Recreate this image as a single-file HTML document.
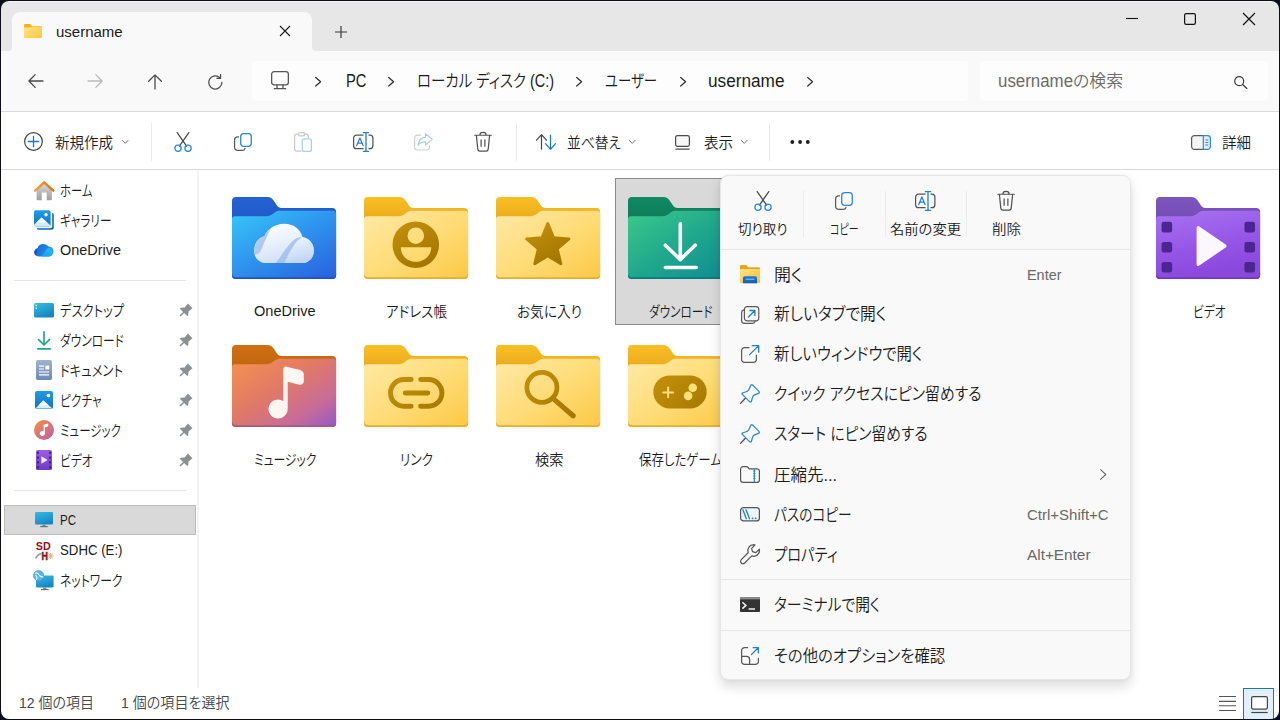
<!DOCTYPE html>
<html lang="ja">
<head>
<meta charset="utf-8">
<title>username</title>
<style>
html,body{margin:0;padding:0;}
body{width:1280px;height:720px;overflow:hidden;background:#fff;position:relative;
 font-family:"Liberation Sans","Noto Sans CJK JP",sans-serif;font-size:15px;color:#1b1b1b;}
*{box-sizing:border-box;}
div,span{position:absolute;}
svg{position:absolute;overflow:visible;}
#frame{left:1px;top:1px;width:1278px;height:718px;border-radius:8px;box-shadow:0 0 0 12px #0b0d1c;z-index:100;}
#titlebar{left:0;top:0;width:1280px;height:51px;background:#e7e7e7;}
#tab{left:12px;top:12px;width:300px;height:39px;background:#f9f9f9;border-radius:8px 8px 0 0;}
#nav{left:0;top:51px;width:1280px;height:61px;background:#f9f9f9;border-bottom:1px solid #dadada;}
#addr{left:252px;top:60.500px;width:716px;height:40px;background:#fdfdfd;border-radius:4px;}
#search{left:980px;top:60.500px;width:288px;height:40px;background:#fdfdfd;border-radius:4px;}
#cmd{left:0;top:112px;width:1280px;height:58px;background:#fff;border-bottom:1px solid #d8d8d8;}
#side{left:0;top:170px;width:199px;height:518px;background:#fff;border-right:2px solid #f3f3f3;}
#content{left:199px;top:170px;width:1081px;height:520px;background:#fff;}
#status{left:0;top:690px;width:1280px;height:30px;background:#fff;}
.t{white-space:nowrap;font-weight:350;transform-origin:0 50%;line-height:20px;height:20px;font-feature-settings:"palt";}
.c{transform:translateX(-50%);}
</style>
</head>
<body>
<div id="titlebar"></div>
<div id="tab"></div>
<div id="nav"></div>
<div id="addr"></div>
<div id="search"></div>
<div id="cmd"></div>
<div id="side"></div>
<div id="content"></div>
<div id="status"></div>
<!-- top highlight -->
<div style="left:8px;top:1px;width:1264px;height:1px;background:#f4f4f4"></div>
<!-- tab flares -->
<svg style="left:8px;top:47px" width="4" height="4" viewBox="0 0 4 4"><path d="M4 0V4H0A4 4 0 0 0 4 0Z" fill="#f9f9f9"/></svg>
<svg style="left:312px;top:47px" width="4" height="4" viewBox="0 0 4 4"><path d="M0 0V4H4A4 4 0 0 1 0 0Z" fill="#f9f9f9"/></svg>
<!-- tab folder icon -->
<svg style="left:24px;top:24px" width="18" height="14" viewBox="0 0 18 14">
 <defs><linearGradient id="tf" x1="0" y1="0" x2="1" y2="1"><stop offset="0" stop-color="#ffe48f"/><stop offset="1" stop-color="#fbc739"/></linearGradient></defs>
 <path d="M0 1.2A1.2 1.2 0 0 1 1.2 0H6L8 2H16.8A1.2 1.2 0 0 1 18 3.2V5H0Z" fill="#f0b41c"/>
 <path d="M0 3.6H7L8.6 2.4H17A1 1 0 0 1 18 3.4V13A1 1 0 0 1 17 14H1A1 1 0 0 1 0 13Z" fill="url(#tf)"/>
</svg>
<!-- tab close -->
<svg style="left:280px;top:26px" width="10" height="10" viewBox="0 0 10 10"><path d="M0 0L10 10M10 0L0 10" stroke="#1b1b1b" stroke-width="1.1" fill="none"/></svg>
<!-- new tab plus -->
<svg style="left:335px;top:26px" width="12" height="12" viewBox="0 0 12 12"><path d="M6 0V12M0 6H12" stroke="#3a3a3a" stroke-width="1.2" fill="none"/></svg>
<!-- window controls -->
<svg style="left:1126px;top:12px" width="12" height="14" viewBox="0 0 12 14"><path d="M0 6.5H12" stroke="#111" stroke-width="1.1"/></svg>
<svg style="left:1184px;top:13px" width="12" height="12" viewBox="0 0 12 12"><rect x="0.6" y="0.6" width="10.8" height="10.8" rx="1.6" stroke="#111" stroke-width="1.2" fill="none"/></svg>
<svg style="left:1243px;top:13px" width="12" height="12" viewBox="0 0 12 12"><path d="M0 0L12 12M12 0L0 12" stroke="#111" stroke-width="1.2" fill="none"/></svg>

<div class="t" style="left:56.0px;top:21.5px">username</div>
<!-- back -->
<svg style="left:28px;top:74px" width="15" height="14" viewBox="0 0 15 14"><path d="M15 7H1M7.2 0.6L0.9 7L7.2 13.4" stroke="#4a4a4a" stroke-width="1.3" fill="none" stroke-linecap="round" stroke-linejoin="round"/></svg>
<!-- forward -->
<svg style="left:88px;top:74px" width="15" height="14" viewBox="0 0 15 14"><path d="M0 7H14M7.8 0.6L14.1 7L7.8 13.4" stroke="#b9b9b9" stroke-width="1.3" fill="none" stroke-linecap="round" stroke-linejoin="round"/></svg>
<!-- up -->
<svg style="left:148px;top:74px" width="14" height="15" viewBox="0 0 14 15"><path d="M7 15V1M0.6 7.2L7 0.9L13.4 7.2" stroke="#4a4a4a" stroke-width="1.3" fill="none" stroke-linecap="round" stroke-linejoin="round"/></svg>
<!-- refresh -->
<svg style="left:208px;top:73.500px" width="15" height="15.500" viewBox="0 0 15 15.500"><path d="M13.9 8.300A6.600 6.600 0 1 1 11.900 3.700" stroke="#4a4a4a" stroke-width="1.250" fill="none" stroke-linecap="round"/><path d="M12.600 0.600V4.300H8.900" stroke="#4a4a4a" stroke-width="1.250" fill="none" stroke-linecap="round" stroke-linejoin="round"/></svg>
<!-- monitor -->
<svg style="left:271px;top:71px" width="18" height="18.500" viewBox="0 0 18 18.500"><rect x="0.650" y="0.650" width="16.700" height="13.200" rx="2.400" stroke="#555" stroke-width="1.300" fill="none"/><path d="M6 14V17.300M12 14V17.300M3.300 17.700H14.700" stroke="#555" stroke-width="1.300" fill="none" stroke-linecap="round"/></svg>
<!-- chevrons -->
<svg style="left:315px;top:77px" width="6.500" height="9.500" viewBox="0 0 6.500 9.500"><path id="chv" d="M0.700 0.500L5.600 4.750L0.700 9" stroke="#2a2a2a" stroke-width="1.200" fill="none" stroke-linecap="round" stroke-linejoin="round"/></svg>
<svg style="left:388px;top:77px" width="6.500" height="9.500" viewBox="0 0 6.500 9.500"><path d="M0.700 0.500L5.600 4.750L0.700 9" stroke="#2a2a2a" stroke-width="1.200" fill="none" stroke-linecap="round" stroke-linejoin="round"/></svg>
<svg style="left:576px;top:77px" width="6.500" height="9.500" viewBox="0 0 6.500 9.500"><path d="M0.700 0.500L5.600 4.750L0.700 9" stroke="#2a2a2a" stroke-width="1.200" fill="none" stroke-linecap="round" stroke-linejoin="round"/></svg>
<svg style="left:679.500px;top:77px" width="6.500" height="9.500" viewBox="0 0 6.500 9.500"><path d="M0.700 0.500L5.600 4.750L0.700 9" stroke="#2a2a2a" stroke-width="1.200" fill="none" stroke-linecap="round" stroke-linejoin="round"/></svg>
<svg style="left:807px;top:77px" width="6.500" height="9.500" viewBox="0 0 6.500 9.500"><path d="M0.700 0.500L5.600 4.750L0.700 9" stroke="#2a2a2a" stroke-width="1.200" fill="none" stroke-linecap="round" stroke-linejoin="round"/></svg>
<!-- search icon -->
<svg style="left:1234px;top:75.500px" width="13.500" height="13" viewBox="0 0 13.500 13"><circle cx="5.200" cy="5.200" r="4.500" stroke="#3c3c3c" stroke-width="1.200" fill="none"/><path d="M8.500 8.500L12.900 12.400" stroke="#3c3c3c" stroke-width="1.300" stroke-linecap="round"/></svg>

<div class="t" style="left:345.5px;top:70.5px;font-size:17.5px;transform:scaleX(0.843)">PC</div>
<div class="t" style="left:416.5px;top:70.5px;font-size:17.5px;transform:scaleX(0.826)">ローカル ディスク (C:)</div>
<div class="t" style="left:605.0px;top:70.5px;font-size:17.5px;transform:scaleX(0.765)">ユーザー</div>
<div class="t" style="left:708.0px;top:70.5px;font-size:17.5px;transform:scaleX(0.983)">username</div>
<div class="t" style="left:997.5px;top:71.0px;font-size:17.5px;transform:scaleX(0.964);color:#6b6b6b">usernameの検索</div>
<!-- new (+) -->
<svg style="left:24px;top:131.800px" width="19" height="19" viewBox="0 0 19 19"><circle cx="9.500" cy="9.500" r="8.850" stroke="#444" stroke-width="1.200" fill="none"/><path d="M9.500 4.300V14.700M4.300 9.500H14.700" stroke="#0a7bd6" stroke-width="1.300" stroke-linecap="round"/></svg>
<svg style="left:121.700px;top:140.200px" width="6.500" height="4" viewBox="0 0 6.500 4"><path d="M0.400 0.400L3.250 3.400L6.100 0.400" stroke="#777" stroke-width="1" fill="none" stroke-linecap="round" stroke-linejoin="round"/></svg>
<div style="left:150.500px;top:123px;width:1px;height:38px;background:#eaeaea"></div>
<!-- cut -->
<svg style="left:174px;top:132px" width="18" height="20" viewBox="0 0 18 20"><path d="M3.200 0.600L12.600 14.200M14.800 0.600L5.400 14.200" stroke="#4a4a4a" stroke-width="1.250" stroke-linecap="round" fill="none"/><circle cx="4" cy="16.300" r="3.100" stroke="#2b88d8" stroke-width="1.300" fill="none"/><circle cx="14" cy="16.300" r="3.100" stroke="#2b88d8" stroke-width="1.300" fill="none"/></svg>
<!-- copy -->
<svg style="left:234px;top:133px" width="18" height="18" viewBox="0 0 18 18"><path d="M4.500 3.900H3.600A3 3 0 0 0 0.600 6.900V14.400A3 3 0 0 0 3.600 17.400H8.200A3 3 0 0 0 11 15.500" stroke="#5a5a5a" stroke-width="1.250" fill="none" stroke-linecap="round"/><rect x="6.700" y="0.650" width="10.600" height="12.700" rx="3" stroke="#2b88d8" stroke-width="1.300" fill="#fdfdfd"/></svg>
<!-- paste (disabled) -->
<svg style="left:294px;top:132px" width="18" height="20" viewBox="0 0 18 20"><path d="M7 19.200H2.600A2 2 0 0 1 0.600 17.200V4.200A2 2 0 0 1 2.600 2.200H4.500M10.500 2.200H12.400A2 2 0 0 1 14.400 4.200V5.500" stroke="#c9c9c9" stroke-width="1.200" fill="none" stroke-linecap="round"/><rect x="4.400" y="0.600" width="6.200" height="3.200" rx="1.600" stroke="#c9c9c9" stroke-width="1.200" fill="none"/><rect x="8.200" y="6.800" width="9.200" height="12.600" rx="2" stroke="#a9cff0" stroke-width="1.300" fill="#fdfdfd"/></svg>
<!-- rename -->
<svg style="left:353px;top:132px" width="20.500" height="20" viewBox="0 0 20.500 20"><path d="M10.500 3.100H3.600A3 3 0 0 0 0.600 6.100V13.700A3 3 0 0 0 3.600 16.700H10.500M15.500 3.100H16.900A3 3 0 0 1 19.900 6.100V13.700A3 3 0 0 1 16.900 16.700H15.500" stroke="#555" stroke-width="1.250" fill="none"/><path d="M13 0.650V19.350M10.400 0.650H15.600M10.400 19.350H15.600" stroke="#1f7fd1" stroke-width="1.300" fill="none" stroke-linecap="round"/><path d="M3.700 13.600L6.900 5.900L10.100 13.600M4.800 11.200H9" stroke="#1f7fd1" stroke-width="1.200" fill="none" stroke-linejoin="round" stroke-linecap="round"/></svg>
<!-- share (disabled) -->
<svg style="left:414px;top:133px" width="19" height="18" viewBox="0 0 19 18"><path d="M6.500 2.100H3.600A3 3 0 0 0 0.600 5.100V14A3 3 0 0 0 3.600 17H12.500A3 3 0 0 0 15.500 14V12.800" stroke="#cfcfcf" stroke-width="1.200" fill="none" stroke-linecap="round"/><path d="M11.600 0.800L18.200 6.400L11.600 12V8.800C8 8.600 5.700 9.800 4.200 12.400C4.600 7.800 7.200 4.600 11.600 4.200Z" stroke="#a9cff0" stroke-width="1.200" fill="none" stroke-linejoin="round"/></svg>
<!-- delete -->
<svg style="left:474px;top:132.300px" width="18" height="19.700" viewBox="0 0 18 20"><path d="M0.600 3.300H17.400M5.800 3.100A3.200 2.800 0 0 1 12.200 3.100M2.300 3.500L3.700 17.400A2.200 2.200 0 0 0 5.900 19.400H12.100A2.200 2.200 0 0 0 14.300 17.400L15.700 3.500M7.100 8V14.500M10.900 8V14.500" stroke="#505050" stroke-width="1.250" fill="none" stroke-linecap="round"/></svg>
<div style="left:516px;top:123px;width:1px;height:38px;background:#eaeaea"></div>
<!-- sort -->
<svg style="left:536px;top:134px" width="20" height="16" viewBox="0 0 20 16"><path d="M5.500 15V0.800M0.500 6.200L5.500 0.700L10.500 6.200" stroke="#4a4a4a" stroke-width="1.250" fill="none" stroke-linecap="round" stroke-linejoin="round"/><path d="M14.500 1V15.200M9.500 9.700L14.500 15.300L19.500 9.700" stroke="#1a77c9" stroke-width="1.250" fill="none" stroke-linecap="round" stroke-linejoin="round"/></svg>
<svg style="left:628.500px;top:140px" width="6.500" height="4" viewBox="0 0 6.500 4"><path d="M0.400 0.400L3.250 3.400L6.100 0.400" stroke="#777" stroke-width="1" fill="none" stroke-linecap="round" stroke-linejoin="round"/></svg>
<!-- view -->
<svg style="left:675.200px;top:134.500px" width="15" height="15" viewBox="0 0 15 15"><rect x="0.600" y="0.600" width="13.800" height="10.800" rx="1.800" stroke="#4a4a4a" stroke-width="1.200" fill="#f6f6f6"/><path d="M0.800 14.100H14.200" stroke="#4a4a4a" stroke-width="1.200" stroke-linecap="round"/></svg>
<svg style="left:740.500px;top:140px" width="6.500" height="4" viewBox="0 0 6.500 4"><path d="M0.400 0.400L3.250 3.400L6.100 0.400" stroke="#777" stroke-width="1" fill="none" stroke-linecap="round" stroke-linejoin="round"/></svg>
<div style="left:769px;top:123px;width:1px;height:38px;background:#eaeaea"></div>
<!-- more -->
<svg style="left:790.300px;top:140.300px" width="20" height="4" viewBox="0 0 20 4"><circle cx="2.300" cy="2" r="1.900" fill="#1f1f1f"/><circle cx="10.100" cy="2" r="1.900" fill="#1f1f1f"/><circle cx="17.800" cy="2" r="1.900" fill="#1f1f1f"/></svg>
<!-- details -->
<svg style="left:1191px;top:134.500px" width="20" height="15" viewBox="0 0 20 15"><path d="M12.300 0.600H3.400A2.800 2.800 0 0 0 0.600 3.400V11.600A2.800 2.800 0 0 0 3.400 14.400H12.300" stroke="#5a5a5a" stroke-width="1.200" fill="#f4f4f4"/><path d="M12.300 0.600H16.600A2.800 2.800 0 0 1 19.400 3.400V11.600A2.800 2.800 0 0 1 16.600 14.400H12.300Z" stroke="#2b88d8" stroke-width="1.200" fill="#e3f0fb"/><path d="M14.400 5H17.300M14.400 7.500H17.300M14.400 10H17.300" stroke="#2b88d8" stroke-width="1.100"/></svg>

<div class="t" style="left:55.0px;top:132.5px;transform:scaleX(0.966)">新規作成</div>
<div class="t" style="left:567.0px;top:132.5px;transform:scaleX(0.917)">並べ替え</div>
<div class="t" style="left:704.0px;top:132.5px;transform:scaleX(0.966)">表示</div>
<div class="t" style="left:1222.0px;top:132.5px;transform:scaleX(0.966)">詳細</div>
<!-- sidebar separators -->
<div style="left:14px;top:280px;width:172px;height:1px;background:#e3e3e3"></div>
<div style="left:14px;top:490px;width:172px;height:1px;background:#e3e3e3"></div>
<!-- selected PC row -->
<div style="left:4px;top:505px;width:192px;height:30px;background:#d9d9d9;border:1px solid #bdbdbd"></div>
<!-- home -->
<svg style="left:33.500px;top:180.500px" width="20.500" height="19.500" viewBox="0 0 20.500 19.500">
 <defs><linearGradient id="hg" x1="0" y1="0" x2="0" y2="1"><stop offset="0" stop-color="#d9d9d9"/><stop offset="1" stop-color="#9f9f9f"/></linearGradient>
 <linearGradient id="hr" x1="0" y1="0" x2="1" y2="0"><stop offset="0" stop-color="#f0a040"/><stop offset="1" stop-color="#d9731f"/></linearGradient></defs>
 <path d="M2.600 8.500L10.250 2L17.900 8.500V18.300A1 1 0 0 1 16.900 19.300H12.700V11.500H7.800V19.300H3.600A1 1 0 0 1 2.600 18.300Z" fill="url(#hg)"/>
 <path d="M1.200 9.600L10.250 1.300L19.300 9.600" stroke="url(#hr)" stroke-width="2.500" fill="none" stroke-linecap="round" stroke-linejoin="round"/>
</svg>
<!-- gallery -->
<svg style="left:34px;top:210px" width="20" height="20" viewBox="0 0 20 20">
 <defs><linearGradient id="gg" x1="0" y1="0" x2="0" y2="1"><stop offset="0" stop-color="#1f9be8"/><stop offset="1" stop-color="#1275c4"/></linearGradient></defs>
 <rect x="2.600" y="2.800" width="17.200" height="17" rx="2.200" fill="#1565b0"/>
 <rect x="1.600" y="1.600" width="16.600" height="16.600" rx="2" fill="#e9f3fb"/>
 <rect x="0" y="0.200" width="16.600" height="16.400" rx="1.800" fill="url(#gg)"/>
 <path d="M0 16.600V14.800L7.600 7.600L16.600 15.600V16.600Z" fill="#d6ebfa"/>
 <path d="M2.500 12.500L7.600 7.600L13 12.400Z" fill="#ffffff"/>
 <circle cx="12" cy="4.800" r="1.700" fill="#fff"/>
</svg>
<!-- onedrive -->
<svg style="left:33.800px;top:242.500px" width="20.200" height="13.800" viewBox="0 0 20.500 14.500" preserveAspectRatio="none">
 <defs><linearGradient id="og1" x1="0" y1="0" x2="1" y2="0.300"><stop offset="0" stop-color="#1b63da"/><stop offset="1" stop-color="#1f94ee"/></linearGradient>
 <linearGradient id="og2" x1="0" y1="1" x2="1" y2="0"><stop offset="0" stop-color="#1f98ee"/><stop offset="1" stop-color="#1cc2f2"/></linearGradient></defs>
 <path d="M4.600 14.300A4.500 4.500 0 0 1 3.600 5.500A6.200 6.200 0 0 1 14.800 3.800A5.300 5.300 0 0 1 15.400 14.300Z" fill="url(#og1)"/>
 <path d="M7.500 14.300L12.800 6.200A4.600 4.600 0 0 1 16 4.900A5.100 5.100 0 0 1 15.400 14.300Z" fill="url(#og2)"/>
 <path d="M0.800 12A4.500 4.500 0 0 1 3.600 5.500C4.200 4.300 4.900 3.400 5.800 2.700C3.200 5 2.200 8.500 2.600 12.600Z" fill="#1746b8" opacity="0.850"/>
</svg>
<!-- desktop -->
<svg style="left:34px;top:302.500px" width="20" height="14.500" viewBox="0 0 20 14.500">
 <defs><linearGradient id="dg" x1="0" y1="0" x2="0.600" y2="1"><stop offset="0" stop-color="#35bfe6"/><stop offset="1" stop-color="#1685bd"/></linearGradient></defs>
 <rect x="0" y="0" width="20" height="14.500" rx="1.600" fill="url(#dg)"/>
 <rect x="1.500" y="1.700" width="1.500" height="1.500" fill="#e8f8ff"/><rect x="1.500" y="4.600" width="1.500" height="1.500" fill="#e8f8ff"/>
</svg>
<!-- downloads -->
<svg style="left:37px;top:331px" width="14" height="19" viewBox="0 0 14 19"><path d="M7 0.800V13.600M1.600 8.600L7 14L12.400 8.600" stroke="#22a886" stroke-width="1.700" fill="none" stroke-linecap="round" stroke-linejoin="round"/><path d="M0.800 17.900H13.200" stroke="#22a886" stroke-width="1.700" stroke-linecap="round"/></svg>
<!-- documents -->
<svg style="left:36px;top:360px" width="16" height="20" viewBox="0 0 16 20">
 <defs><linearGradient id="dcg" x1="0" y1="0" x2="0" y2="1"><stop offset="0" stop-color="#9fb4cf"/><stop offset="1" stop-color="#6d8cb2"/></linearGradient></defs>
 <rect x="0" y="0" width="16" height="20" rx="1.600" fill="url(#dcg)"/>
 <path d="M3 6.200H8M3 9H8M3 12H13M3 14.800H13" stroke="#fff" stroke-width="1.200"/><rect x="9.400" y="5.600" width="3.800" height="3.800" fill="#fff"/>
</svg>
<!-- pictures -->
<svg style="left:35px;top:391px" width="18" height="18" viewBox="0 0 18 18">
 <defs><linearGradient id="pg" x1="0" y1="0" x2="0" y2="1"><stop offset="0" stop-color="#1f9be8"/><stop offset="1" stop-color="#1275c4"/></linearGradient></defs>
 <rect x="0" y="0" width="18" height="18" rx="2" fill="url(#pg)"/>
 <path d="M0.600 17.400L8.200 9.400L17.400 17.400Z" fill="#dcedfb"/>
 <path d="M3.600 14.200L8.200 9.400L13.700 14.200Z" fill="#fff"/>
 <circle cx="13.400" cy="4.600" r="1.800" fill="#fff"/>
</svg>
<!-- music -->
<svg style="left:34px;top:420px" width="20" height="20" viewBox="0 0 20 20">
 <defs><linearGradient id="mg" x1="0.150" y1="0.100" x2="0.850" y2="0.950"><stop offset="0" stop-color="#ee8a50"/><stop offset="1" stop-color="#c0629f"/></linearGradient></defs>
 <circle cx="10" cy="10" r="10" fill="url(#mg)"/>
 <path d="M9.600 4.800L14.200 3.600V6.400L10.900 7.300V13.600A2.600 2.400 0 1 1 9.600 11.500Z" fill="#fff"/>
</svg>
<!-- videos -->
<svg style="left:36px;top:450px" width="16" height="20" viewBox="0 0 16 20">
 <defs><linearGradient id="vg" x1="0" y1="0" x2="0" y2="1"><stop offset="0" stop-color="#9a5ee6"/><stop offset="1" stop-color="#6f3bc4"/></linearGradient></defs>
 <rect x="0" y="0" width="16" height="20" rx="1.600" fill="url(#vg)"/>
 <path d="M5.400 6.200L11.600 10L5.400 13.800Z" fill="#f2e9ff"/>
 <g fill="#3c1d85"><rect x="1" y="1.800" width="2" height="2"/><rect x="1" y="6.600" width="2" height="2"/><rect x="1" y="11.400" width="2" height="2"/><rect x="1" y="16.200" width="2" height="2"/><rect x="13" y="1.800" width="2" height="2"/><rect x="13" y="6.600" width="2" height="2"/><rect x="13" y="11.400" width="2" height="2"/><rect x="13" y="16.200" width="2" height="2"/></g>
</svg>
<!-- PC -->
<svg style="left:35px;top:512px" width="18" height="15.500" viewBox="0 0 18 15.500">
 <defs><linearGradient id="pcg" x1="0" y1="0" x2="0.500" y2="1"><stop offset="0" stop-color="#33bde6"/><stop offset="1" stop-color="#1787c2"/></linearGradient></defs>
 <rect x="0" y="0" width="18" height="12.600" rx="1" fill="url(#pcg)"/>
 <path d="M7.400 12.600H10.600V14.400H7.400Z" fill="#7c8a92"/><path d="M5.200 14.600H12.800" stroke="#5d6a72" stroke-width="1.100"/>
</svg>
<!-- SD card -->
<svg style="left:35px;top:540px" width="20" height="21" viewBox="0 0 20 21">
 <text x="0.800" y="10" font-family="Liberation Sans,sans-serif" font-weight="bold" font-size="11.500" fill="#8c1216" textLength="14.900" lengthAdjust="spacingAndGlyphs">SD</text>
 <path d="M0.600 18.400C2.400 15.200 4.200 13.800 6.600 13.600" stroke="#8a96b8" stroke-width="1.600" fill="none"/>
 <text x="6.500" y="19.800" font-family="Liberation Sans,sans-serif" font-weight="bold" font-size="10.500" fill="#8c1216" stroke="#8c1216" stroke-width="0.500" textLength="6.400" lengthAdjust="spacingAndGlyphs">H</text>
 <path d="M13.600 13.400L17.800 18.400M17.800 13.400L13.600 18.400M12.800 15.900H18.600M15.700 12.800V19" stroke="#f0a468" stroke-width="0.900"/>
</svg>
<!-- network -->
<svg style="left:32.600px;top:569.500px" width="21" height="21" viewBox="0 0 21 21">
 <defs><linearGradient id="ng" x1="0" y1="0" x2="0.500" y2="1"><stop offset="0" stop-color="#33bde6"/><stop offset="1" stop-color="#1787c2"/></linearGradient></defs>
 <rect x="3" y="5.600" width="17.600" height="11.800" rx="1" fill="url(#ng)"/>
 <path d="M10.200 17.400H13.400V19.200H10.200Z" fill="#7c8a92"/><path d="M8 19.600H15.600" stroke="#5d6a72" stroke-width="1.100"/>
 <circle cx="5.600" cy="5.600" r="5.200" fill="#55b4ea"/>
 <path d="M2 3.200C4 2.400 5.400 3.600 6.400 5.200C7.400 6.800 9 7 10.400 6.600M3 9.600C4.400 8 4 6.200 2.400 5" stroke="#e9f7ff" stroke-width="1.200" fill="none"/>
 <circle cx="5.600" cy="5.600" r="5.200" fill="none" stroke="#3d9fd8" stroke-width="0.600"/>
</svg>
<!-- pins -->
<svg style="left:177.100px;top:305.1px" width="14" height="14" viewBox="-7 -7 14 14"><g transform="translate(0.900,-0.900) rotate(45)"><path d="M-3.300 -7.400H3.300L2.800 -2.400L5.200 0.600V1.900H0.750V6.900H-0.750V1.900H-5.200V0.600L-2.800 -2.400Z" fill="#8b9094"/></g></svg>
<svg style="left:177.100px;top:335.1px" width="14" height="14" viewBox="-7 -7 14 14"><g transform="translate(0.900,-0.900) rotate(45)"><path d="M-3.300 -7.400H3.300L2.800 -2.400L5.200 0.600V1.900H0.750V6.900H-0.750V1.900H-5.200V0.600L-2.800 -2.400Z" fill="#8b9094"/></g></svg>
<svg style="left:177.100px;top:365.1px" width="14" height="14" viewBox="-7 -7 14 14"><g transform="translate(0.900,-0.900) rotate(45)"><path d="M-3.300 -7.400H3.300L2.800 -2.400L5.200 0.600V1.900H0.750V6.900H-0.750V1.900H-5.200V0.600L-2.800 -2.400Z" fill="#8b9094"/></g></svg>
<svg style="left:177.100px;top:395.1px" width="14" height="14" viewBox="-7 -7 14 14"><g transform="translate(0.900,-0.900) rotate(45)"><path d="M-3.300 -7.400H3.300L2.800 -2.400L5.200 0.600V1.900H0.750V6.900H-0.750V1.900H-5.200V0.600L-2.800 -2.400Z" fill="#8b9094"/></g></svg>
<svg style="left:177.100px;top:425.1px" width="14" height="14" viewBox="-7 -7 14 14"><g transform="translate(0.900,-0.900) rotate(45)"><path d="M-3.300 -7.400H3.300L2.800 -2.400L5.200 0.600V1.900H0.750V6.900H-0.750V1.900H-5.200V0.600L-2.800 -2.400Z" fill="#8b9094"/></g></svg>
<svg style="left:177.100px;top:455.1px" width="14" height="14" viewBox="-7 -7 14 14"><g transform="translate(0.900,-0.900) rotate(45)"><path d="M-3.300 -7.400H3.300L2.800 -2.400L5.200 0.600V1.900H0.750V6.900H-0.750V1.900H-5.200V0.600L-2.800 -2.400Z" fill="#8b9094"/></g></svg>

<div class="t" style="left:59.5px;top:180.9px;transform:scaleX(0.757)">ホーム</div>
<div class="t" style="left:59.5px;top:210.9px;transform:scaleX(0.776)">ギャラリー</div>
<div class="t" style="left:59.5px;top:240.3px;transform:scaleX(0.963)">OneDrive</div>
<div class="t" style="left:59.5px;top:300.9px;transform:scaleX(0.819)">デスクトップ</div>
<div class="t" style="left:59.5px;top:330.9px;transform:scaleX(0.782)">ダウンロード</div>
<div class="t" style="left:59.5px;top:360.9px;transform:scaleX(0.823)">ドキュメント</div>
<div class="t" style="left:59.5px;top:390.9px;transform:scaleX(0.779)">ピクチャ</div>
<div class="t" style="left:59.5px;top:420.9px;transform:scaleX(0.767)">ミュージック</div>
<div class="t" style="left:59.5px;top:450.9px;transform:scaleX(0.781)">ビデオ</div>
<div class="t" style="left:59.5px;top:510.3px;transform:scaleX(0.768)">PC</div>
<div class="t" style="left:59.5px;top:540.3px;transform:scaleX(0.882)">SDHC (E:)</div>
<div class="t" style="left:59.5px;top:570.9px;transform:scaleX(0.788)">ネットワーク</div>
<!-- selected tile -->
<div style="left:615px;top:178px;width:132px;height:146.500px;background:#d9d9d9;border:1px solid #8a8a8a"></div>
<svg style="left:231.5px;top:197px" width="104.100" height="82" viewBox="0 0 104.5 82.5" preserveAspectRatio="none">
<defs><linearGradient id="ff0" x1="0" y1="0" x2="0.85" y2="1"><stop offset="0" stop-color="#38c8f8"/><stop offset="0.45" stop-color="#2f9af0"/><stop offset="1" stop-color="#2a66e0"/></linearGradient><linearGradient id="fb0" x1="0" y1="0" x2="0" y2="1"><stop offset="0" stop-color="#2462d4"/><stop offset="0.300" stop-color="#2158c6"/></linearGradient><linearGradient id="cl0" x1="0.200" y1="0" x2="0.500" y2="1"><stop offset="0" stop-color="#ffffff"/><stop offset="1" stop-color="#cfe0f8"/></linearGradient><linearGradient id="cm0" x1="0" y1="1" x2="1" y2="0"><stop offset="0" stop-color="#e8f0fc"/><stop offset="0.500" stop-color="#a9c5ef"/><stop offset="1" stop-color="#dbe8fa"/></linearGradient><linearGradient id="cr0" x1="0" y1="0" x2="0.400" y2="1"><stop offset="0" stop-color="#f6f9ff"/><stop offset="1" stop-color="#c3d8f6"/></linearGradient></defs>
<path d="M0 4A4 4 0 0 1 4 0H35.500C38.500 0 40.200 1.300 41.800 3.600L45 8.400C46.200 10.200 47.600 11 49.800 11H100.500A4 4 0 0 1 104.500 15V78.500A4 4 0 0 1 100.500 82.500H4A4 4 0 0 1 0 78.500Z" fill="url(#fb0)"/>
<path d="M0 22.400A3 3 0 0 1 3 19.400H34.500C37.200 19.400 39 18.600 40.800 17.200L43.200 15.300C44.800 14.100 46.400 13.800 48.400 13.800H101A3.500 3.500 0 0 1 104.500 17.300V78.500A4 4 0 0 1 100.500 82.500H4A4 4 0 0 1 0 78.500Z" fill="url(#ff0)"/>
<path d="M0 76.500V78.500A4 4 0 0 0 4 82.500H100.500A4 4 0 0 0 104.500 78.500V76.500A4 4 0 0 1 100.500 80.700H4A4 4 0 0 1 0 76.500Z" fill="#2352c4"/>
<path d="M34 66.500C27 66.500 22.200 61 22.200 54C22.200 46.500 26.500 41 32.500 39.500C35.500 32 43.500 27 52.500 27C61.500 27 68.500 32 71 40.500C77.500 41.500 82.200 47 82.200 54C82.200 61 77 66.500 70.500 66.500Z" fill="url(#cl0)"/>
<path d="M23 58C21 49 26 41.500 32.500 39.500C34 36 36.500 33 39.500 31C36 38 32 46 30 52C28.500 56 26 58 23 58Z" fill="#9dbcec" opacity="0.750"/>
<path d="M44 66.500C50 58 57 47 63 42.500C66 40.500 68.500 40.200 71 40.500C77.500 41.500 82.200 47 82.200 54C82.200 61 77 66.500 70.500 66.500Z" fill="url(#cr0)"/>
<path d="M44 66.500C50 58 57 47 63 42.500C65.500 40.800 68 40.300 70 40.400C64 44 58 54 52.500 66.500Z" fill="#9dbcec" opacity="0.800"/>
</svg>
<svg style="left:363.5px;top:197px" width="104.100" height="82" viewBox="0 0 104.5 82.5" preserveAspectRatio="none">
<defs><linearGradient id="ff1" x1="0" y1="0" x2="1" y2="1"><stop offset="0" stop-color="#ffe9a6"/><stop offset="0.55" stop-color="#ffdb74"/><stop offset="1" stop-color="#fbc844"/></linearGradient><linearGradient id="fb1" x1="0" y1="0" x2="0" y2="1"><stop offset="0" stop-color="#fbbf24"/><stop offset="0.300" stop-color="#e9a81c"/></linearGradient><linearGradient id="gd1" x1="0" y1="0" x2="0.600" y2="1"><stop offset="0" stop-color="#c6920c"/><stop offset="1" stop-color="#a37700"/></linearGradient></defs>
<path d="M0 4A4 4 0 0 1 4 0H35.500C38.500 0 40.200 1.300 41.800 3.600L45 8.400C46.200 10.200 47.600 11 49.800 11H100.500A4 4 0 0 1 104.500 15V78.500A4 4 0 0 1 100.500 82.500H4A4 4 0 0 1 0 78.500Z" fill="url(#fb1)"/>
<path d="M0 22.400A3 3 0 0 1 3 19.400H34.500C37.200 19.400 39 18.600 40.800 17.200L43.200 15.300C44.800 14.100 46.400 13.800 48.400 13.800H101A3.500 3.500 0 0 1 104.500 17.300V78.500A4 4 0 0 1 100.500 82.500H4A4 4 0 0 1 0 78.500Z" fill="url(#ff1)"/>
<path d="M0 76.500V78.500A4 4 0 0 0 4 82.500H100.500A4 4 0 0 0 104.500 78.500V76.500A4 4 0 0 1 100.500 80.700H4A4 4 0 0 1 0 76.500Z" fill="#e6ae2e"/>
<path fill-rule="evenodd" d="M52 24.600A23.400 23.400 0 1 1 52 71.400A23.400 23.400 0 1 1 52 24.600ZM52 30.600A8.300 8.300 0 1 0 52 47.200A8.300 8.300 0 1 0 52 30.600ZM37 50.500C37 59 43.500 65.200 52 65.200C60.500 65.200 67.500 59 67.500 50.500Z" fill="url(#gd1)"/>
</svg>
<svg style="left:495.5px;top:197px" width="104.100" height="82" viewBox="0 0 104.5 82.5" preserveAspectRatio="none">
<defs><linearGradient id="ff2" x1="0" y1="0" x2="1" y2="1"><stop offset="0" stop-color="#ffe9a6"/><stop offset="0.55" stop-color="#ffdb74"/><stop offset="1" stop-color="#fbc844"/></linearGradient><linearGradient id="fb2" x1="0" y1="0" x2="0" y2="1"><stop offset="0" stop-color="#fbbf24"/><stop offset="0.300" stop-color="#e9a81c"/></linearGradient><linearGradient id="gd2" x1="0" y1="0" x2="0.600" y2="1"><stop offset="0" stop-color="#c6920c"/><stop offset="1" stop-color="#a37700"/></linearGradient></defs>
<path d="M0 4A4 4 0 0 1 4 0H35.500C38.500 0 40.200 1.300 41.800 3.600L45 8.400C46.200 10.200 47.600 11 49.800 11H100.500A4 4 0 0 1 104.500 15V78.500A4 4 0 0 1 100.500 82.500H4A4 4 0 0 1 0 78.500Z" fill="url(#fb2)"/>
<path d="M0 22.400A3 3 0 0 1 3 19.400H34.500C37.200 19.400 39 18.600 40.800 17.200L43.200 15.300C44.800 14.100 46.400 13.800 48.400 13.800H101A3.500 3.500 0 0 1 104.500 17.300V78.500A4 4 0 0 1 100.500 82.500H4A4 4 0 0 1 0 78.500Z" fill="url(#ff2)"/>
<path d="M0 76.500V78.500A4 4 0 0 0 4 82.500H100.500A4 4 0 0 0 104.500 78.500V76.500A4 4 0 0 1 100.500 80.700H4A4 4 0 0 1 0 76.500Z" fill="#e6ae2e"/>
<path d="M52.00 26.80L57.82 41.09L73.21 42.21L61.42 52.16L65.11 67.14L52.00 59.00L38.89 67.14L42.58 52.16L30.79 42.21L46.18 41.09Z" fill="url(#gd2)" stroke="url(#gd2)" stroke-width="3" stroke-linejoin="round"/>
</svg>
<svg style="left:627.5px;top:197px" width="104.100" height="82" viewBox="0 0 104.5 82.5" preserveAspectRatio="none">
<defs><linearGradient id="ff3" x1="0" y1="0" x2="1" y2="1"><stop offset="0" stop-color="#3cc98c"/><stop offset="0.5" stop-color="#1fa88c"/><stop offset="1" stop-color="#0c8a94"/></linearGradient><linearGradient id="fb3" x1="0" y1="0" x2="0" y2="1"><stop offset="0" stop-color="#108a63"/><stop offset="0.300" stop-color="#0e7a58"/></linearGradient></defs>
<path d="M0 4A4 4 0 0 1 4 0H35.500C38.500 0 40.200 1.300 41.800 3.600L45 8.400C46.200 10.200 47.600 11 49.800 11H100.500A4 4 0 0 1 104.500 15V78.500A4 4 0 0 1 100.500 82.500H4A4 4 0 0 1 0 78.500Z" fill="url(#fb3)"/>
<path d="M0 22.400A3 3 0 0 1 3 19.400H34.500C37.200 19.400 39 18.600 40.800 17.200L43.200 15.300C44.800 14.100 46.400 13.800 48.400 13.800H101A3.500 3.500 0 0 1 104.500 17.300V78.500A4 4 0 0 1 100.500 82.500H4A4 4 0 0 1 0 78.500Z" fill="url(#ff3)"/>
<path d="M0 76.500V78.500A4 4 0 0 0 4 82.500H100.500A4 4 0 0 0 104.500 78.500V76.500A4 4 0 0 1 100.500 80.700H4A4 4 0 0 1 0 76.500Z" fill="#0b7a80"/>
<path d="M52.500 27V62M37.500 48.500L52.500 63L67.500 48.500M37.500 71H68.500" stroke="#fff" stroke-width="3.600" fill="none" stroke-linecap="round" stroke-linejoin="round"/>
</svg>
<svg style="left:1155.5px;top:197px" width="104.100" height="82" viewBox="0 0 104.5 82.5" preserveAspectRatio="none">
<defs><linearGradient id="ff4" x1="0" y1="0" x2="0.3" y2="1"><stop offset="0" stop-color="#a873f2"/><stop offset="0.6" stop-color="#9556e6"/><stop offset="1" stop-color="#8a48dc"/></linearGradient><linearGradient id="fb4" x1="0" y1="0" x2="0" y2="1"><stop offset="0" stop-color="#7c55be"/><stop offset="0.300" stop-color="#734cb4"/></linearGradient></defs>
<path d="M0 4A4 4 0 0 1 4 0H35.500C38.500 0 40.200 1.300 41.800 3.600L45 8.400C46.200 10.200 47.600 11 49.800 11H100.500A4 4 0 0 1 104.500 15V78.500A4 4 0 0 1 100.500 82.500H4A4 4 0 0 1 0 78.500Z" fill="url(#fb4)"/>
<path d="M0 22.400A3 3 0 0 1 3 19.400H34.500C37.200 19.400 39 18.600 40.800 17.200L43.200 15.300C44.800 14.100 46.400 13.800 48.400 13.800H101A3.500 3.500 0 0 1 104.500 17.300V78.500A4 4 0 0 1 100.500 82.500H4A4 4 0 0 1 0 78.500Z" fill="url(#ff4)"/>
<path d="M0 76.500V78.500A4 4 0 0 0 4 82.500H100.500A4 4 0 0 0 104.500 78.500V76.500A4 4 0 0 1 100.500 80.700H4A4 4 0 0 1 0 76.500Z" fill="#7438c4"/>
<g fill="#4b2591"><rect x="5.600" y="25" width="10.600" height="10.600" rx="2.200"/><rect x="5.600" y="45.200" width="10.600" height="10.600" rx="2.200"/><rect x="5.600" y="65.400" width="10.600" height="10.600" rx="2.200"/><rect x="88.800" y="25" width="10.600" height="10.600" rx="2.200"/><rect x="88.800" y="45.200" width="10.600" height="10.600" rx="2.200"/><rect x="88.800" y="65.400" width="10.600" height="10.600" rx="2.200"/></g>
<path d="M42.500 31L69 49.300L42.500 67.600Z" fill="#fbf7ff" stroke="#fbf7ff" stroke-width="3.500" stroke-linejoin="round"/>
</svg>
<svg style="left:231.5px;top:345px" width="104.100" height="82" viewBox="0 0 104.5 82.5" preserveAspectRatio="none">
<defs><linearGradient id="ff5" x1="0" y1="0" x2="1" y2="1"><stop offset="0" stop-color="#f5924e"/><stop offset="0.45" stop-color="#e07868"/><stop offset="0.75" stop-color="#c86c98"/><stop offset="1" stop-color="#9158c8"/></linearGradient><linearGradient id="fb5" x1="0" y1="0" x2="0" y2="1"><stop offset="0" stop-color="#cf6f12"/><stop offset="0.300" stop-color="#bf6410"/></linearGradient></defs>
<path d="M0 4A4 4 0 0 1 4 0H35.500C38.500 0 40.200 1.300 41.800 3.600L45 8.400C46.200 10.200 47.600 11 49.800 11H100.500A4 4 0 0 1 104.500 15V78.500A4 4 0 0 1 100.500 82.500H4A4 4 0 0 1 0 78.500Z" fill="url(#fb5)"/>
<path d="M0 22.400A3 3 0 0 1 3 19.400H34.500C37.200 19.400 39 18.600 40.800 17.200L43.200 15.300C44.800 14.100 46.400 13.800 48.400 13.800H101A3.500 3.500 0 0 1 104.500 17.300V78.500A4 4 0 0 1 100.500 82.500H4A4 4 0 0 1 0 78.500Z" fill="url(#ff5)"/>
<path d="M0 76.500V78.500A4 4 0 0 0 4 82.500H100.500A4 4 0 0 0 104.500 78.500V76.500A4 4 0 0 1 100.500 80.700H4A4 4 0 0 1 0 76.500Z" fill="#a85a78"/>
<path transform="translate(-1.500,0)" d="M53 24.500C53 22.700 54.400 21.400 56.200 21.800L70 25.200C72.200 25.800 73.600 27.600 73.600 29.800V36.500C73.600 39 71.400 40.600 69 40L57.400 37V64.400A9.600 9.600 0 1 1 53 56.300Z" fill="#fdf6f2"/>
</svg>
<svg style="left:363.5px;top:345px" width="104.100" height="82" viewBox="0 0 104.5 82.5" preserveAspectRatio="none">
<defs><linearGradient id="ff6" x1="0" y1="0" x2="1" y2="1"><stop offset="0" stop-color="#ffe9a6"/><stop offset="0.55" stop-color="#ffdb74"/><stop offset="1" stop-color="#fbc844"/></linearGradient><linearGradient id="fb6" x1="0" y1="0" x2="0" y2="1"><stop offset="0" stop-color="#fbbf24"/><stop offset="0.300" stop-color="#e9a81c"/></linearGradient><linearGradient id="gd6" gradientUnits="userSpaceOnUse" x1="30" y1="25" x2="75" y2="72"><stop offset="0" stop-color="#c6920c"/><stop offset="1" stop-color="#a37700"/></linearGradient></defs>
<path d="M0 4A4 4 0 0 1 4 0H35.500C38.500 0 40.200 1.300 41.800 3.600L45 8.400C46.200 10.200 47.600 11 49.800 11H100.500A4 4 0 0 1 104.500 15V78.500A4 4 0 0 1 100.500 82.500H4A4 4 0 0 1 0 78.500Z" fill="url(#fb6)"/>
<path d="M0 22.400A3 3 0 0 1 3 19.400H34.500C37.200 19.400 39 18.600 40.800 17.200L43.200 15.300C44.800 14.100 46.400 13.800 48.400 13.800H101A3.500 3.500 0 0 1 104.500 17.300V78.500A4 4 0 0 1 100.500 82.500H4A4 4 0 0 1 0 78.500Z" fill="url(#ff6)"/>
<path d="M0 76.500V78.500A4 4 0 0 0 4 82.500H100.500A4 4 0 0 0 104.500 78.500V76.500A4 4 0 0 1 100.500 80.700H4A4 4 0 0 1 0 76.500Z" fill="#e6ae2e"/>
<path d="M47.300 34.800H40A13.400 13.400 0 0 0 40 61.600H47.300M56.900 34.800H64.800A13.400 13.400 0 0 1 64.800 61.600H56.900M41.400 48.200H64" stroke="url(#gd6)" stroke-width="5" fill="none" stroke-linecap="round"/>
</svg>
<svg style="left:495.5px;top:345px" width="104.100" height="82" viewBox="0 0 104.5 82.5" preserveAspectRatio="none">
<defs><linearGradient id="ff7" x1="0" y1="0" x2="1" y2="1"><stop offset="0" stop-color="#ffe9a6"/><stop offset="0.55" stop-color="#ffdb74"/><stop offset="1" stop-color="#fbc844"/></linearGradient><linearGradient id="fb7" x1="0" y1="0" x2="0" y2="1"><stop offset="0" stop-color="#fbbf24"/><stop offset="0.300" stop-color="#e9a81c"/></linearGradient><linearGradient id="gd7" gradientUnits="userSpaceOnUse" x1="30" y1="25" x2="75" y2="72"><stop offset="0" stop-color="#c6920c"/><stop offset="1" stop-color="#a37700"/></linearGradient></defs>
<path d="M0 4A4 4 0 0 1 4 0H35.500C38.500 0 40.200 1.300 41.800 3.600L45 8.400C46.200 10.200 47.600 11 49.800 11H100.500A4 4 0 0 1 104.500 15V78.500A4 4 0 0 1 100.500 82.500H4A4 4 0 0 1 0 78.500Z" fill="url(#fb7)"/>
<path d="M0 22.400A3 3 0 0 1 3 19.400H34.500C37.200 19.400 39 18.600 40.800 17.200L43.200 15.300C44.800 14.100 46.400 13.800 48.400 13.800H101A3.500 3.500 0 0 1 104.500 17.300V78.500A4 4 0 0 1 100.500 82.500H4A4 4 0 0 1 0 78.500Z" fill="url(#ff7)"/>
<path d="M0 76.500V78.500A4 4 0 0 0 4 82.500H100.500A4 4 0 0 0 104.500 78.500V76.500A4 4 0 0 1 100.500 80.700H4A4 4 0 0 1 0 76.500Z" fill="#e6ae2e"/>
<circle cx="46.100" cy="42.700" r="15.100" stroke="url(#gd7)" stroke-width="4.800" fill="none"/><path d="M57.800 54.200L77.400 71.200" stroke="url(#gd7)" stroke-width="5.200" stroke-linecap="round"/>
</svg>
<svg style="left:627.5px;top:345px" width="104.100" height="82" viewBox="0 0 104.5 82.5" preserveAspectRatio="none">
<defs><linearGradient id="ff8" x1="0" y1="0" x2="1" y2="1"><stop offset="0" stop-color="#ffe9a6"/><stop offset="0.55" stop-color="#ffdb74"/><stop offset="1" stop-color="#fbc844"/></linearGradient><linearGradient id="fb8" x1="0" y1="0" x2="0" y2="1"><stop offset="0" stop-color="#fbbf24"/><stop offset="0.300" stop-color="#e9a81c"/></linearGradient><linearGradient id="gd8" gradientUnits="userSpaceOnUse" x1="30" y1="25" x2="75" y2="72"><stop offset="0" stop-color="#c6920c"/><stop offset="1" stop-color="#a37700"/></linearGradient></defs>
<path d="M0 4A4 4 0 0 1 4 0H35.500C38.500 0 40.200 1.300 41.800 3.600L45 8.400C46.200 10.200 47.600 11 49.800 11H100.500A4 4 0 0 1 104.500 15V78.500A4 4 0 0 1 100.500 82.500H4A4 4 0 0 1 0 78.500Z" fill="url(#fb8)"/>
<path d="M0 22.400A3 3 0 0 1 3 19.400H34.500C37.200 19.400 39 18.600 40.800 17.200L43.200 15.300C44.800 14.100 46.400 13.800 48.400 13.800H101A3.500 3.500 0 0 1 104.500 17.300V78.500A4 4 0 0 1 100.500 82.500H4A4 4 0 0 1 0 78.500Z" fill="url(#ff8)"/>
<path d="M0 76.500V78.500A4 4 0 0 0 4 82.500H100.500A4 4 0 0 0 104.500 78.500V76.500A4 4 0 0 1 100.500 80.700H4A4 4 0 0 1 0 76.500Z" fill="#e6ae2e"/>
<rect x="25.400" y="30.600" width="53.600" height="33.200" rx="16.600" fill="url(#gd8)"/><path d="M40.300 42.800V52.600M35.400 47.700H45.200" stroke="#ffe07a" stroke-width="2" stroke-linecap="round"/><circle cx="65" cy="43" r="4.300" fill="#ffe07a"/><circle cx="60.400" cy="51.200" r="4.300" fill="#ffe07a"/>
</svg>

<div class="t" style="left:254.0px;top:301.3px;transform:scaleX(0.971)">OneDrive</div>
<div class="t" style="left:386.0px;top:302.2px;transform:scaleX(0.903)">アドレス帳</div>
<div class="t" style="left:516.5px;top:302.2px;transform:scaleX(0.911)">お気に入り</div>
<div class="t" style="left:648.5px;top:302.2px;transform:scaleX(0.776)">ダウンロード</div>
<div class="t" style="left:1192.5px;top:302.2px;transform:scaleX(0.781)">ビデオ</div>
<div class="t" style="left:253.5px;top:450.2px;transform:scaleX(0.786)">ミュージック</div>
<div class="t" style="left:400.0px;top:450.2px;transform:scaleX(0.844)">リンク</div>
<div class="t" style="left:534.5px;top:450.2px;transform:scaleX(0.950)">検索</div>
<div class="t" style="left:639.0px;top:450.2px;transform:scaleX(0.831)">保存したゲーム</div>
<svg style="left:1219px;top:695px" width="17" height="17" viewBox="0 0 17 17"><path d="M0 1.500H17M0 6.400H17M0 10.700H17M0 15.500H17" stroke="#555" stroke-width="1.100"/></svg>
<div style="left:1243px;top:688px;width:31px;height:34px;background:#e1f0fb;border:1px solid #1c75bc"></div>
<svg style="left:1251px;top:696px" width="17" height="17.500" viewBox="0 0 17 17.500"><rect x="0.600" y="0.600" width="15.800" height="12.600" rx="1.600" stroke="#444" stroke-width="1.200" fill="#fdfeff"/><path d="M0.300 16.500H16.700" stroke="#444" stroke-width="1.200"/></svg>

<div class="t" style="left:19.0px;top:693.4px;transform:scaleX(0.934);color:#43474f">12 個の項目</div>
<div class="t" style="left:121.0px;top:693.4px;transform:scaleX(0.937);color:#43474f">1 個の項目を選択</div>
<div id="menu" style="left:720px;top:175px;width:411px;height:505px;background:#f9f9f9;border:1px solid #e6e6e6;border-radius:8px;box-shadow:0 7px 12px rgba(0,0,0,0.130),0 0 4px rgba(0,0,0,0.050)"></div>
<div style="left:721px;top:249px;width:409px;height:1px;background:#e5e5e5"></div>
<div style="left:721px;top:579px;width:409px;height:1px;background:#e5e5e5"></div>
<div style="left:721px;top:630px;width:409px;height:1px;background:#e5e5e5"></div>
<div style="left:803px;top:191px;width:1px;height:46px;background:#ececec"></div>
<div style="left:884.500px;top:191px;width:1px;height:46px;background:#ececec"></div>
<div style="left:965.500px;top:191px;width:1px;height:46px;background:#ececec"></div>
<!-- cut -->
<svg style="left:754px;top:191px" width="18" height="20" viewBox="0 0 18 20"><path d="M3.200 0.600L12.600 14.200M14.800 0.600L5.400 14.200" stroke="#4a4a4a" stroke-width="1.250" stroke-linecap="round" fill="none"/><circle cx="4" cy="16.300" r="3.100" stroke="#2b88d8" stroke-width="1.300" fill="none"/><circle cx="14" cy="16.300" r="3.100" stroke="#2b88d8" stroke-width="1.300" fill="none"/></svg>
<!-- copy -->
<svg style="left:835px;top:192px" width="18" height="18" viewBox="0 0 18 18"><path d="M4.500 3.900H3.600A3 3 0 0 0 0.600 6.900V14.400A3 3 0 0 0 3.600 17.400H8.200A3 3 0 0 0 11 15.500" stroke="#5a5a5a" stroke-width="1.250" fill="none" stroke-linecap="round"/><rect x="6.700" y="0.650" width="10.600" height="12.700" rx="3" stroke="#2b88d8" stroke-width="1.300" fill="#f9f9f9"/></svg>
<!-- rename -->
<svg style="left:915px;top:191px" width="20.500" height="20" viewBox="0 0 20.500 20"><path d="M10.500 3.100H3.600A3 3 0 0 0 0.600 6.100V13.700A3 3 0 0 0 3.600 16.700H10.500M15.500 3.100H16.900A3 3 0 0 1 19.900 6.100V13.700A3 3 0 0 1 16.900 16.700H15.500" stroke="#555" stroke-width="1.250" fill="none"/><path d="M13 0.650V19.350M10.400 0.650H15.600M10.400 19.350H15.600" stroke="#1f7fd1" stroke-width="1.300" fill="none" stroke-linecap="round"/><path d="M3.700 13.600L6.900 5.900L10.100 13.600M4.800 11.200H9" stroke="#1f7fd1" stroke-width="1.200" fill="none" stroke-linejoin="round" stroke-linecap="round"/></svg>
<!-- delete -->
<svg style="left:997px;top:191.300px" width="18" height="19.700" viewBox="0 0 18 20"><path d="M0.600 3.300H17.400M5.800 3.100A3.200 2.800 0 0 1 12.200 3.100M2.300 3.500L3.700 17.400A2.200 2.200 0 0 0 5.900 19.400H12.100A2.200 2.200 0 0 0 14.300 17.400L15.700 3.500M7.100 8V14.500M10.900 8V14.500" stroke="#505050" stroke-width="1.250" fill="none" stroke-linecap="round"/></svg>
<!-- open: explorer icon -->
<svg style="left:740px;top:265px" width="20" height="18.300" viewBox="0 0 20.500 18.500" preserveAspectRatio="none">
 <defs><linearGradient id="ex1" x1="0" y1="0" x2="1" y2="1"><stop offset="0" stop-color="#ffe28a"/><stop offset="1" stop-color="#f9c12e"/></linearGradient><linearGradient id="ex2" x1="0" y1="0" x2="0" y2="1"><stop offset="0" stop-color="#1e78d0"/><stop offset="1" stop-color="#155fb4"/></linearGradient></defs>
 <path d="M0 1.400A1.400 1.400 0 0 1 1.400 0H6.400L8.400 2.200H19.100A1.400 1.400 0 0 1 20.500 3.600V6H0Z" fill="#e8a51b"/>
 <path d="M0 4H20.500V17.100A1.400 1.400 0 0 1 19.100 18.500H1.400A1.400 1.400 0 0 1 0 17.100Z" fill="url(#ex1)"/>
 <path d="M3 18.500V13.400A2 2 0 0 1 5 11.400H15.500A2 2 0 0 1 17.500 13.400V18.500Z" fill="url(#ex2)"/>
 <rect x="5.600" y="13.600" width="9.300" height="1.600" rx="0.800" fill="#5fb0f0"/>
</svg>
<!-- new tab -->
<svg style="left:741px;top:305.500px" width="18.500" height="18" viewBox="0 0 18.500 18"><path d="M2.800 3.800A2.800 2.800 0 0 0 0.600 6.500V14.600A2.800 2.800 0 0 0 3.400 17.400H11.500A2.800 2.800 0 0 0 14.200 15.200" stroke="#5a5a5a" stroke-width="1.200" fill="none" stroke-linecap="round"/><rect x="3.400" y="0.600" width="14.400" height="14.200" rx="2.800" stroke="#5a5a5a" stroke-width="1.200" fill="none"/><path d="M7.400 11L13.600 4.800M8.800 4.500H13.900V9.600" stroke="#1f7fd1" stroke-width="1.300" fill="none" stroke-linecap="round" stroke-linejoin="round"/></svg>
<!-- new window -->
<svg style="left:741px;top:345px" width="18.500" height="18" viewBox="0 0 18.500 18"><path d="M8 2.600H3.600A3 3 0 0 0 0.600 5.600V14.400A3 3 0 0 0 3.600 17.400H12.400A3 3 0 0 0 15.400 14.400V10" stroke="#5a5a5a" stroke-width="1.200" fill="none" stroke-linecap="round"/><path d="M8.600 9.600L17.400 0.900M11.200 0.650H17.700V7.200" stroke="#1f7fd1" stroke-width="1.300" fill="none" stroke-linecap="round" stroke-linejoin="round"/></svg>
<!-- pin x2 -->
<svg style="left:740px;top:384px" width="20" height="20" viewBox="0 0 20 20"><path d="M0.500 19.400L5.400 14.300" stroke="#4a4a4a" stroke-width="1.300" stroke-linecap="round"/><path d="M10.900 1.100C11.400 0.500 12.100 0.500 12.600 1L19 7.400C19.600 8 19.500 8.700 18.800 9.100C17.200 10 14.700 10.400 13.500 11.500C12.300 12.700 12.200 15.600 11.300 17.500C11 18.300 10.300 18.400 9.800 17.900L2.300 10.400C1.700 9.800 1.900 9.200 2.700 8.900C4.700 8.200 7.300 7.600 8.400 6.300C9.500 5 9.800 2.600 10.900 1.100Z" stroke="#2b88d8" stroke-width="1.250" fill="none" stroke-linejoin="round"/></svg>
<svg style="left:740px;top:424px" width="20" height="20" viewBox="0 0 20 20"><path d="M0.500 19.400L5.400 14.300" stroke="#4a4a4a" stroke-width="1.300" stroke-linecap="round"/><path d="M10.900 1.100C11.400 0.500 12.100 0.500 12.600 1L19 7.400C19.600 8 19.500 8.700 18.800 9.100C17.200 10 14.700 10.400 13.500 11.500C12.300 12.700 12.200 15.600 11.300 17.500C11 18.300 10.300 18.400 9.800 17.900L2.300 10.400C1.700 9.800 1.900 9.200 2.700 8.900C4.700 8.200 7.300 7.600 8.400 6.300C9.500 5 9.800 2.600 10.900 1.100Z" stroke="#2b88d8" stroke-width="1.250" fill="none" stroke-linejoin="round"/></svg>
<!-- zip folder -->
<svg style="left:740px;top:465.500px" width="20" height="17" viewBox="0 0 20 17"><path d="M0.600 3A2.400 2.400 0 0 1 3 0.600H6.200C7 0.600 7.600 0.900 8.100 1.500L9.200 2.800H17A2.400 2.400 0 0 1 19.400 5.200V14A2.400 2.400 0 0 1 17 16.400H3A2.400 2.400 0 0 1 0.600 14Z" stroke="#555" stroke-width="1.200" fill="none"/><path d="M14.300 3V16M13.200 5H15.400M13.200 7.500H15.400M13.200 10H15.400M13.200 12.500H15.400" stroke="#1f7fd1" stroke-width="1.100"/></svg>
<!-- chevron -->
<svg style="left:1099.500px;top:469px" width="6.500" height="11" viewBox="0 0 6.500 11"><path d="M0.600 0.600L5.800 5.500L0.600 10.400" stroke="#6a6a6a" stroke-width="1.100" fill="none" stroke-linecap="round" stroke-linejoin="round"/></svg>
<!-- copy path -->
<svg style="left:740px;top:506.500px" width="20" height="14.500" viewBox="0 0 20 14.500"><rect x="0.600" y="0.600" width="18.800" height="13.300" rx="3" stroke="#555" stroke-width="1.200" fill="#eef5fc"/><path d="M2.900 2.800L6.300 11.800M6 2.800L9.500 11.800" stroke="#1f7fd1" stroke-width="1.300" stroke-linecap="round"/><circle cx="12.600" cy="11.300" r="0.900" fill="#1f7fd1"/><circle cx="15.700" cy="11.300" r="0.900" fill="#1f7fd1"/></svg>
<!-- properties wrench -->
<svg style="left:740px;top:544px" width="20" height="20.500" viewBox="0 0 20 20.500"><path d="M13.600 0.700A5.700 5.700 0 0 0 8.300 8.500L1.300 15.700A2.300 2.300 0 0 0 4.600 19L11.800 11.900A5.700 5.700 0 0 0 19.300 5.200L15.800 8.600L12.500 7.700L11.600 4.400L15 1A5.700 5.700 0 0 0 13.600 0.700Z" stroke="#555" stroke-width="1.200" fill="none" stroke-linejoin="round"/></svg>
<!-- terminal -->
<svg style="left:740px;top:597px" width="20" height="15" viewBox="0 0 20 15"><rect x="0" y="0" width="20" height="15" rx="0.800" fill="#333"/><rect x="0" y="0" width="20" height="2.400" fill="#8a8a8a"/><path d="M2.400 5.200L5.900 8.400L2.400 11.600" stroke="#f2f2f2" stroke-width="1.500" fill="none"/><path d="M8.600 12H15" stroke="#f2f2f2" stroke-width="1.500"/></svg>
<!-- show more options -->
<svg style="left:741px;top:646.500px" width="18" height="18" viewBox="0 0 18 18"><path d="M6.600 0.600H3.600A3 3 0 0 0 0.600 3.600V14.400A3 3 0 0 0 3.600 17.400H14.400A3 3 0 0 0 17.400 14.400V11.400M0.600 9.400H5.600A3 3 0 0 1 8.600 12.400V17.400" stroke="#555" stroke-width="1.200" fill="none" stroke-linecap="round"/><path d="M10.400 7.600L17.200 0.800M12.200 0.650H17.350V5.800" stroke="#1f7fd1" stroke-width="1.300" fill="none" stroke-linecap="round" stroke-linejoin="round"/></svg>

<div class="t" style="left:737.5px;top:219.5px;font-size:13.75px;transform:scaleX(0.982)">切り取り</div>
<div class="t" style="left:829.5px;top:219.5px;font-size:13.75px;transform:scaleX(0.723)">コピー</div>
<div class="t" style="left:889.5px;top:219.5px;font-size:13.75px;transform:scaleX(1.040)">名前の変更</div>
<div class="t" style="left:991.5px;top:219.5px;font-size:13.75px;transform:scaleX(1.054)">削除</div>
<div class="t" style="left:773.9px;top:264.6px;font-size:16.5px;transform:scaleX(1.027)">開く</div>
<div class="t" style="left:773.9px;top:304.6px;font-size:17px;transform:scaleX(0.926)">新しいタブで開く</div>
<div class="t" style="left:773.9px;top:344.6px;font-size:17px;transform:scaleX(0.905)">新しいウィンドウで開く</div>
<div class="t" style="left:773.9px;top:384.6px;font-size:17px;transform:scaleX(0.875)">クイック アクセスにピン留めする</div>
<div class="t" style="left:773.9px;top:424.6px;font-size:17px;transform:scaleX(0.870)">スタート にピン留めする</div>
<div class="t" style="left:773.9px;top:464.6px;font-size:16.5px">圧縮先...</div>
<div class="t" style="left:773.9px;top:504.6px;font-size:17.3px;transform:scaleX(0.792)">パスのコピー</div>
<div class="t" style="left:773.9px;top:544.6px;font-size:17.3px;transform:scaleX(0.826)">プロパティ</div>
<div class="t" style="left:773.9px;top:595.5px;font-size:17px;transform:scaleX(0.868)">ターミナルで開く</div>
<div class="t" style="left:773.9px;top:646.9px;font-size:17px;transform:scaleX(0.903)">その他のオプションを確認</div>
<div class="t" style="left:1027.0px;top:264.5px;transform:scaleX(0.962);color:#686868">Enter</div>
<div class="t" style="left:1027.0px;top:504.5px;color:#686868">Ctrl+Shift+C</div>
<div class="t" style="left:1027.0px;top:544.5px;transform:scaleX(1.022);color:#686868">Alt+Enter</div>
<div id="frame"></div>
</body>
</html>
